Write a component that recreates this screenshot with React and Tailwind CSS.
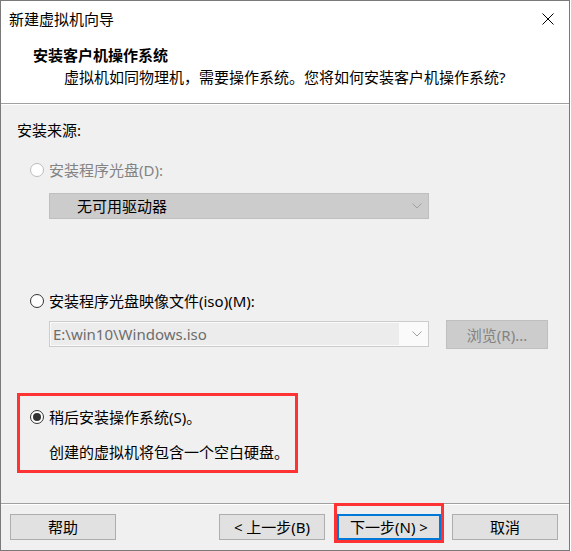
import React from "react";

function Radio({ state }) {
  if (state === "disabled") {
    return <span className="w-[14px] h-[14px] rounded-full border border-[#bcbcbc] bg-white shrink-0" />;
  }
  return (
    <span className="w-[14px] h-[14px] rounded-full border border-[#333333] bg-white shrink-0 flex items-center justify-center">
      {state === "on" && <span className="w-[8px] h-[8px] rounded-full bg-[#333333]" />}
    </span>
  );
}

function Chevron({ color }) {
  return (
    <svg width="10" height="6" viewBox="0 0 10 6" className="shrink-0">
      <path d="M0.5 0.5L5 5L9.5 0.5" fill="none" stroke={color} strokeWidth="1" />
    </svg>
  );
}

function Btn({ children, className = "", box = "w-[106px] border border-[#adadad]" }) {
  return (
    <div
      className={
        "h-[26px] bg-[#e1e1e1] flex items-center justify-center leading-[20px] " + box + " " + className
      }
    >
      {children}
    </div>
  );
}

export default function App() {
  return (
    <div className="w-[571px] h-[551px] bg-white">
      <div className="w-[570px] h-[551px] border border-[#7a7a7a] bg-[#f0f0f0] flex flex-col text-[15px] text-black font-['Noto_Sans','Noto_Sans_CJK_SC',sans-serif]">
        {/* Title bar */}
        <div className="h-[36px] bg-white flex items-center justify-between pl-[8px] pr-[15px]">
          <span className="leading-[20px]">新建虚拟机向导</span>
          <svg width="12" height="12" viewBox="0 0 12 12">
            <path d="M0.5 0.5L11.5 11.5M11.5 0.5L0.5 11.5" stroke="#000" strokeWidth="1" />
          </svg>
        </div>
        {/* Header */}
        <div className="bg-white h-[66px] pl-[32px] pt-[8px]">
          <div className="font-bold leading-[20px]">安装客户机操作系统</div>
          <div className="leading-[20px] mt-[2px] pl-[31px]">
            虚拟机如同物理机，需要操作系统。您将如何安装客户机操作系统?
          </div>
        </div>
        <div className="h-px bg-[#a0a0a0]" />
        <div className="h-px bg-white" />

        {/* Body */}
        <div className="flex-1 flex flex-col pl-[16px]">
          <div className="mt-[15px] leading-[20px]">安装来源:</div>

          <div className="mt-[20px] ml-[13px] h-[20px] flex items-center gap-[5px] text-[#838383]">
            <Radio state="disabled" />
            <span className="leading-[20px]">安装程序光盘(D):</span>
          </div>
          <div className="mt-[13px] ml-[32px] w-[380px] h-[26px] bg-[#cccccc] border border-[#bfbfbf] flex items-center justify-between pl-[27px] pr-[6px]">
            <span className="leading-[20px]">无可用驱动器</span>
            <Chevron color="#a0a0a0" />
          </div>

          <div className="mt-[72px] ml-[13px] h-[20px] flex items-center gap-[5px]">
            <Radio state="off" />
            <span className="leading-[20px]">安装程序光盘映像文件(iso)(M):</span>
          </div>
          <div className="mt-[9px] ml-[32px] flex items-start gap-[17px]">
            <div className="mt-px w-[380px] h-[26px] bg-[#fafafa] border border-[#cccccc] flex items-center pl-px pr-[6px]">
              <div className="flex-1 h-[22px] bg-[#ececec] flex items-center pl-[2px] text-[#6d6d6d] leading-[20px]">
                E:\win10\Windows.iso
              </div>
              <div className="w-[23px] flex justify-end">
                <Chevron color="#a0a0a0" />
              </div>
            </div>
            <div className="w-[102px] h-[29px] bg-[#cccccc] border border-[#bfbfbf] flex items-center justify-center text-[#838383] leading-[20px]">
              浏览(R)...
            </div>
          </div>

          <div className="mt-[44px] w-[281px] h-[80px] border-[3px] border-[#f33] pl-[10px] pt-[11px]">
            <div className="h-[20px] flex items-center gap-[5px]">
              <Radio state="on" />
              <span className="leading-[20px]">稍后安装操作系统(S)。</span>
            </div>
            <div className="mt-[15px] pl-[19px] leading-[20px]">创建的虚拟机将包含一个空白硬盘。</div>
          </div>
        </div>

        <div className="h-px bg-[#a0a0a0]" />
        <div className="h-px bg-white" />

        {/* Footer */}
        <div className="h-[45px] flex items-start pt-[9px] pl-[9px]">
          <Btn>帮助</Btn>
          <Btn className="ml-[103px]">&lt; 上一步(B)</Btn>
          <div className="relative ml-[12px]">
            <Btn box="w-[104px] border-2 border-[#0078d7]">下一步(N) &gt;</Btn>
            <div className="absolute -left-[3px] -right-[3px] -top-[11px] -bottom-[3px] border-[3px] border-[#f33] pointer-events-none" />
          </div>
          <Btn className="ml-[11px]">取消</Btn>
        </div>
      </div>
    </div>
  );
}
